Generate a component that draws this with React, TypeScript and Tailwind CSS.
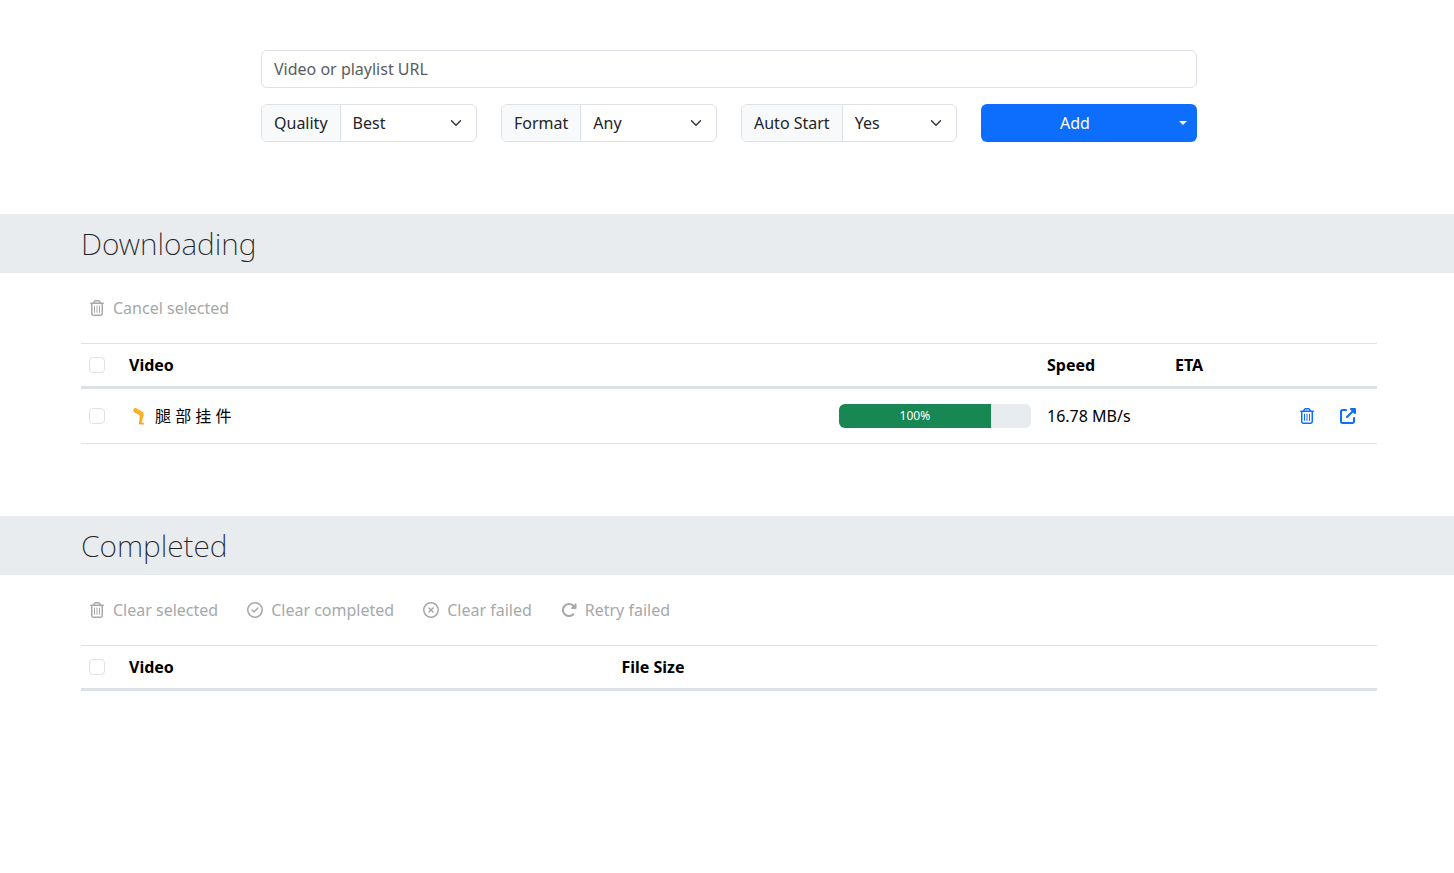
import React, { useState } from 'react';
import {
  FaRegCircleCheck,
  FaRegCircleXmark,
  FaRegTrashCan,
  FaRotateRight,
  FaUpRightFromSquare,
} from 'react-icons/fa6';

interface Download {
  id: string;
  title: string;
  percent: number;
  barWidth: number;
  speed: string;
  eta: string;
}

const downloads: Download[] = [
  { id: 'leg', title: '腿 部 挂 件', percent: 100, barWidth: 79, speed: '16.78 MB/s', eta: '' },
];

interface SelectGroupProps {
  id: string;
  label: string;
  options: string[];
}

const SelectGroup: React.FC<SelectGroupProps> = ({ id, label, options }) => (
  <div className="flex h-[38px] rounded-md border border-[#dee2e6] bg-white">
    <label
      htmlFor={id}
      className="flex items-center whitespace-nowrap rounded-l-md border-r border-[#dee2e6] bg-[#f8f9fa] px-3"
    >
      {label}
    </label>
    <div className="relative min-w-0 flex-1">
      <select id={id} className="h-full w-full appearance-none rounded-r-md bg-transparent pl-3 pr-9">
        {options.map((option) => (
          <option key={option}>{option}</option>
        ))}
      </select>
      <svg
        viewBox="0 0 16 16"
        className="pointer-events-none absolute inset-y-0 right-3 my-auto h-3 w-4"
        fill="none"
        stroke="#343a40"
        strokeWidth="2"
        strokeLinecap="round"
        strokeLinejoin="round"
      >
        <path d="m2 5 6 6 6-6" />
      </svg>
    </div>
  </div>
);

const Checkbox: React.FC<{ label: string }> = ({ label }) => (
  <input
    type="checkbox"
    aria-label={label}
    className="block size-4 appearance-none rounded border border-[#dee2e6] bg-white checked:border-[#0d6efd] checked:bg-[#0d6efd]"
  />
);

const SectionHeading: React.FC<{ children: React.ReactNode }> = ({ children }) => (
  <div className="bg-[#e9ecef]">
    <div className="mx-auto max-w-[1324px] py-[10px] pl-4 pr-3">
      <h2 className="text-[30px] font-extralight leading-[39px]">{children}</h2>
    </div>
  </div>
);

interface ToolbarButtonProps {
  icon: React.ReactNode;
  children: React.ReactNode;
}

const ToolbarButton: React.FC<ToolbarButtonProps> = ({ icon, children }) => (
  <button type="button" disabled className="flex h-[38px] items-center gap-2 px-2 text-[#a6a8aa]">
    <span className="flex w-4 justify-center">{icon}</span>
    {children}
  </button>
);

const LegIcon = () => (
  <svg viewBox="0 0 16 18" className="h-[18px] w-4" aria-hidden="true">
    <path
      d="M3.4 1.2C2.2 1.5 1.8 3.4 2.8 4.4c1.800 1.300 4.300 2 6.300 3.400.3 2.300-.3 4.700-.4 6.800L8.400 17h4.400c.4-.8-.3-1.200-2-1.500.2-2.600 1.600-5 1.900-7.500.1-1.700-.5-2.900-1.700-3.600L5.800 1.400c-.8-.4-1.700-.4-2.400-.2Z"
      fill="#fcb321"
    />
    <path
      d="M2.800 4.400c1.800 1.300 4.300 2 6.300 3.400.3 2.300-.3 4.700-.4 6.800L8.400 17h4.400"
      fill="none"
      stroke="#e9961a"
      strokeWidth="0.8"
    />
  </svg>
);

export default function App() {
  const [url, setUrl] = useState('');

  return (
    <div className="min-h-screen bg-white pb-12 font-['Noto_Sans','Noto_Sans_CJK_SC',sans-serif] text-base text-[#212529]">
      <main>
        <div className="mx-auto max-w-[1324px] pb-[72px] pl-4 pr-3 pt-[50px]">
          <form className="mx-auto max-w-[936px]" onSubmit={(e) => e.preventDefault()}>
            <input
              type="text"
              aria-label="Video or playlist URL"
              placeholder="Video or playlist URL"
              value={url}
              onChange={(e) => setUrl(e.target.value)}
              className="mb-4 block h-[38px] w-full rounded-md border border-[#dee2e6] px-3 placeholder:text-[#595c5f]"
            />
            <div className="grid grid-cols-1 gap-x-6 gap-y-4 sm:grid-cols-2 lg:grid-cols-4">
              <SelectGroup id="quality" label="Quality" options={['Best', '1080p', '720p']} />
              <SelectGroup id="format" label="Format" options={['Any', 'MP4']} />
              <SelectGroup id="autostart" label="Auto Start" options={['Yes', 'No']} />
              <div className="flex h-[38px] overflow-hidden rounded-md bg-[#0d6efd] text-white">
                <button type="submit" className="flex-1">
                  Add
                </button>
                <button type="button" aria-label="More options" className="flex w-7 items-center justify-center">
                  <svg viewBox="0 0 8 4" className="h-1 w-2" fill="currentColor">
                    <path d="M0 0h8L4 4Z" />
                  </svg>
                </button>
              </div>
            </div>
          </form>
        </div>

        <SectionHeading>Downloading</SectionHeading>
        <div className="mx-auto max-w-[1324px] pb-[72px] pl-4 pr-3">
          <div className="flex flex-wrap py-4">
            <ToolbarButton icon={<FaRegTrashCan />}>Cancel selected</ToolbarButton>
          </div>
          <table className="w-full table-fixed text-left text-black">
            <thead>
              <tr className="h-11 border-b-[3px] border-t border-b-[#dee2e6] border-t-[#dee2e6]">
                <th className="w-10 px-2">
                  <Checkbox label="Select all downloads" />
                </th>
                <th className="px-2 font-bold">Video</th>
                <th className="w-32 px-2 font-bold">Speed</th>
                <th className="w-32 px-2 font-bold">ETA</th>
                <th className="w-[82px]" />
              </tr>
            </thead>
            <tbody>
              {downloads.map((download) => (
                <tr key={download.id} className="h-14 border-b border-[#dee2e6]">
                  <td className="px-2">
                    <Checkbox label={`Select ${download.title}`} />
                  </td>
                  <td className="px-2">
                    <div className="flex items-center justify-between gap-4">
                      <div className="flex items-center gap-2 pl-[2px]">
                        <LegIcon />
                        {download.title}
                      </div>
                      <div className="flex h-6 w-48 overflow-hidden rounded-md bg-[#e9ecef] text-xs text-white">
                        <div
                          className="flex items-center justify-center bg-[#198754]"
                          style={{ width: `${download.barWidth}%` }}
                        >
                          {download.percent}%
                        </div>
                      </div>
                    </div>
                  </td>
                  <td className="whitespace-nowrap px-2">{download.speed}</td>
                  <td className="px-2">{download.eta}</td>
                  <td>
                    <div className="flex gap-[25px] pl-1 text-[#0d6efd]">
                      <button type="button" aria-label="Cancel download" className="flex w-4 justify-center">
                        <FaRegTrashCan />
                      </button>
                      <a href="#video" aria-label="Open video" className="flex w-4 justify-center">
                        <FaUpRightFromSquare />
                      </a>
                    </div>
                  </td>
                </tr>
              ))}
            </tbody>
          </table>
        </div>

        <SectionHeading>Completed</SectionHeading>
        <div className="mx-auto max-w-[1324px] pl-4 pr-3">
          <div className="flex flex-wrap gap-x-[13px] py-4">
            <ToolbarButton icon={<FaRegTrashCan />}>Clear selected</ToolbarButton>
            <ToolbarButton icon={<FaRegCircleCheck />}>Clear completed</ToolbarButton>
            <ToolbarButton icon={<FaRegCircleXmark />}>Clear failed</ToolbarButton>
            <ToolbarButton icon={<FaRotateRight />}>Retry failed</ToolbarButton>
          </div>
          <table className="w-full table-fixed text-left text-black">
            <thead>
              <tr className="h-11 border-b-[3px] border-t border-b-[#dee2e6] border-t-[#dee2e6]">
                <th className="w-10 px-2">
                  <Checkbox label="Select all completed" />
                </th>
                <th className="w-[38%] px-2 font-bold">Video</th>
                <th className="px-2 font-bold">File Size</th>
              </tr>
            </thead>
          </table>
        </div>
      </main>
    </div>
  );
}
